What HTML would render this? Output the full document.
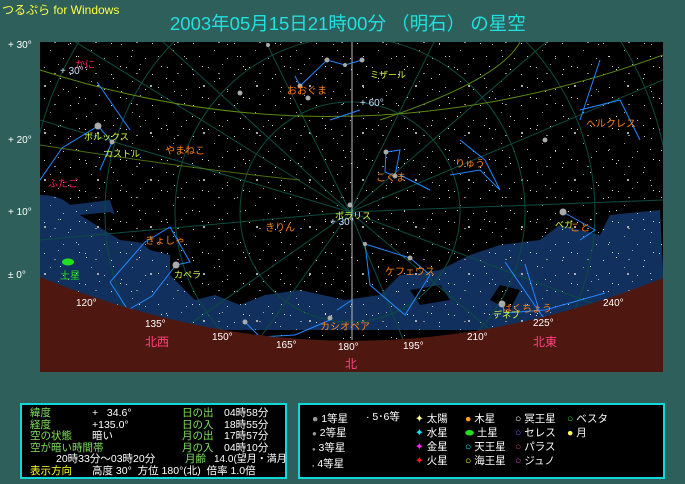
<!DOCTYPE html>
<html><head><meta charset="utf-8"><style>
body{margin:0;width:685px;height:484px;background:#2f5f5a;overflow:hidden;font-family:"Liberation Sans","Noto Sans CJK JP",sans-serif;position:relative}
.t{position:absolute;white-space:nowrap}
.panel{position:absolute;background:#000;border:2px solid #10d8d8;box-sizing:border-box;overflow:hidden}
.panel .t{font-size:10.5px;line-height:11.5px}
</style></head><body>
<div class="t" style="left:2px;top:1px;font-size:12px;color:#ffff40">つるぷら for Windows</div>
<div class="t" style="left:170px;top:10px;font-size:18.5px;color:#20e0e0">2003年05月15日21時00分 （明石） の星空</div>
<div class="t" style="left:8px;top:40px;font-size:10px;color:#fff">+ 30°</div>
<div class="t" style="left:8px;top:135px;font-size:10px;color:#fff">+ 20°</div>
<div class="t" style="left:8px;top:207px;font-size:10px;color:#fff">+ 10°</div>
<div class="t" style="left:8px;top:270px;font-size:10px;color:#fff">± 0°</div>
<svg style="position:absolute;left:40px;top:42px" width="623" height="330" viewBox="40 42 623 330">
<defs>
<pattern id="st" width="41" height="31" patternUnits="userSpaceOnUse">
<rect x="3" y="5" width="1" height="1" fill="#ccc"/><rect x="17" y="2" width="1" height="1" fill="#aaa"/><rect x="29" y="12" width="1" height="1" fill="#ddd"/><rect x="9" y="19" width="1" height="1" fill="#999"/><rect x="35" y="25" width="1" height="1" fill="#ccc"/><rect x="22" y="27" width="1" height="1" fill="#bbb"/><rect x="13" y="11" width="2" height="1" fill="#888"/><rect x="38" y="4" width="1" height="1" fill="#eee"/>
</pattern>
<pattern id="st2" width="53" height="47" patternUnits="userSpaceOnUse">
<rect x="7" y="31" width="1" height="1" fill="#ddd"/><rect x="25" y="9" width="1" height="1" fill="#ccc"/><rect x="44" y="38" width="2" height="2" fill="#aaa"/><rect x="33" y="22" width="1" height="1" fill="#eee"/><rect x="15" y="44" width="1" height="1" fill="#bbb"/>
</pattern>
</defs>
<rect x="40" y="42" width="623" height="330" fill="#000"/>
<path d="M40 195 Q60 195 70 205 L110 200 L118 225 L150 250 L170 255 L170 275 L195 300 L215 295 L240 305 L265 295 L300 290 L345 300 L380 295 L400 275 L440 270 L470 255 L500 245 L540 240 L560 225 L600 235 L610 215 L660 210 L663 270 L663 330 L40 330 Z" fill="#12305e"/>
<path d="M80 215 L110 212 L140 230 L160 245 L120 240 Z M410 290 L440 285 L450 300 L420 305 Z M490 300 L500 285 L520 290 L510 310 Z" fill="#000"/>
<rect x="40" y="42" width="623" height="330" fill="url(#st)"/>
<rect x="40" y="42" width="623" height="330" fill="url(#st2)"/>
<g fill="none" stroke="#0c4c40" stroke-width="1">
<circle cx="350" cy="212" r="110"/><circle cx="350" cy="212" r="175"/><circle cx="350" cy="212" r="245"/><circle cx="350" cy="212" r="320"/>
<path d="M350 212 L40 20 M350 212 L40 120 M350 212 L40 240 M350 212 L110 380 M350 212 L230 380 M350 212 L420 380 M350 212 L550 380 M350 212 L663 330 M350 212 L663 200 M350 212 L663 80 M350 212 L560 30 M350 212 L440 30 M350 212 L260 30 M350 212 L150 30"/>
</g>
<g fill="none" stroke="#5a8a10" stroke-width="1">
<path d="M40 70 Q350 170 663 55"/><path d="M40 145 Q200 170 300 180" opacity=".8"/><path d="M380 120 Q500 80 520 42"/><line x1="352" y1="42" x2="352" y2="340" stroke="#bbb"/>
</g>
<g fill="none" stroke="#2288ff" stroke-width="1">
<path d="M97 82 L130 130 M40 180 L62 148 L98 126 L112 142 L100 170 M300 86 L327 60 L345 65 L362 60 M300 86 L295 76 M330 120 L360 110 M386 152 L400 150 L395 176 L385 172 Z M400 175 L430 190 M450 175 L480 170 L500 190 L485 160 L460 140 M580 110 L620 100 L640 140 M600 60 L580 120 M145 242 L170 227 L190 262 L176 265 L152 296 L128 310 L110 282 Z M365 244 L410 258 L430 275 L405 315 L370 285 Z M525 264 L540 313 M505 313 L545 310 L605 293 M505 262 L540 313 L550 325 M563 212 L595 230 L580 240 M243 320 L260 337 L295 335 L330 320 M337 310 L352 300"/>
</g>
<g fill="#aaa">
<circle cx="98" cy="126" r="3.5"/><circle cx="112" cy="142" r="2.5"/><circle cx="300" cy="86" r="2.5"/><circle cx="327" cy="60" r="2.5"/><circle cx="345" cy="65" r="2"/><circle cx="362" cy="60" r="2.5"/><circle cx="308" cy="98" r="2.5"/><circle cx="240" cy="93" r="2.5"/><circle cx="350" cy="205" r="2.5"/><circle cx="386" cy="152" r="2.5"/><circle cx="395" cy="176" r="2.5"/><circle cx="563" cy="212" r="3.5"/><circle cx="502" cy="304" r="3.5"/><circle cx="176" cy="265" r="3.5"/><circle cx="410" cy="258" r="2.5"/><circle cx="365" cy="244" r="2"/><circle cx="245" cy="322" r="2.5"/><circle cx="330" cy="318" r="2.5"/><circle cx="128" cy="310" r="2"/><circle cx="545" cy="140" r="2.5"/><circle cx="268" cy="45" r="2"/></g>
<path d="M40 277 Q350 404 663 278 L663 372 L40 372 Z" fill="#4e1810"/>
<ellipse cx="68" cy="262" rx="6" ry="3.5" fill="#20e020"/>
</svg>
<div class="t" style="left:75px;top:56px;font-size:10px;color:#ff2060">かに</div>
<div class="t" style="left:60px;top:66px;font-size:10px;color:#c8e0ff">+ 30°</div>
<div class="t" style="left:360px;top:98px;font-size:10px;color:#c8e0ff">+ 60°</div>
<div class="t" style="left:330px;top:217px;font-size:10px;color:#c8e0ff">+ 30°</div>
<div class="t" style="left:48px;top:175px;font-size:10px;color:#ff2060">ふたご</div>
<div class="t" style="left:84px;top:130px;font-size:9px;color:#d8ff40">ポルックス</div>
<div class="t" style="left:104px;top:147px;font-size:9px;color:#d8ff40">カストル</div>
<div class="t" style="left:165px;top:142px;font-size:10px;color:#ff8010">やまねこ</div>
<div class="t" style="left:287px;top:82px;font-size:10px;color:#ff8010">おおぐま</div>
<div class="t" style="left:370px;top:68px;font-size:9px;color:#d8ff40">ミザール</div>
<div class="t" style="left:376px;top:169px;font-size:10px;color:#ff8010">こぐま</div>
<div class="t" style="left:455px;top:155px;font-size:10px;color:#ff8010">りゅう</div>
<div class="t" style="left:586px;top:115px;font-size:10px;color:#ff8010">ヘルクレス</div>
<div class="t" style="left:265px;top:219px;font-size:10px;color:#ff8010">きりん</div>
<div class="t" style="left:335px;top:209px;font-size:9px;color:#d8ff40">ポラリス</div>
<div class="t" style="left:145px;top:232px;font-size:10px;color:#ff8010">きょしゃ</div>
<div class="t" style="left:174px;top:268px;font-size:9px;color:#d8ff40">カペラ</div>
<div class="t" style="left:60px;top:267px;font-size:10px;color:#20e020">土星</div>
<div class="t" style="left:385px;top:263px;font-size:10px;color:#ff8010">ケフェウス</div>
<div class="t" style="left:502px;top:300px;font-size:10px;color:#ff8010">はくちょう</div>
<div class="t" style="left:493px;top:308px;font-size:9px;color:#d8ff40">デネブ</div>
<div class="t" style="left:555px;top:218px;font-size:9px;color:#d8ff40">ベガ</div>
<div class="t" style="left:570px;top:219px;font-size:10px;color:#ff8010">こと</div>
<div class="t" style="left:320px;top:318px;font-size:10px;color:#ff8010">カシオペア</div>
<div class="t" style="left:76px;top:298px;font-size:10px;color:#fff">120°</div>
<div class="t" style="left:145px;top:319px;font-size:10px;color:#fff">135°</div>
<div class="t" style="left:212px;top:332px;font-size:10px;color:#fff">150°</div>
<div class="t" style="left:276px;top:340px;font-size:10px;color:#fff">165°</div>
<div class="t" style="left:338px;top:342px;font-size:10px;color:#fff">180°</div>
<div class="t" style="left:403px;top:341px;font-size:10px;color:#fff">195°</div>
<div class="t" style="left:467px;top:332px;font-size:10px;color:#fff">210°</div>
<div class="t" style="left:533px;top:318px;font-size:10px;color:#fff">225°</div>
<div class="t" style="left:603px;top:298px;font-size:10px;color:#fff">240°</div>
<div class="t" style="left:145px;top:333px;font-size:12px;color:#ff4080">北西</div>
<div class="t" style="left:345px;top:355px;font-size:12px;color:#ff4080">北</div>
<div class="t" style="left:533px;top:333px;font-size:12px;color:#ff4080">北東</div>

<div class="panel" style="left:20px;top:403px;width:267px;height:76px">
<div class="t" style="left:8px;top:3px;color:#7fe060">緯度<br>経度<br>空の状態<br>空が暗い時間帯</div>
<div class="t" style="left:70px;top:3px;color:#fff">+&nbsp;&nbsp;&nbsp;34.6°<br>+135.0°<br>暗い</div>
<div class="t" style="left:160px;top:3px;color:#7fe060">日の出<br>日の入<br>月の出<br>月の入</div>
<div class="t" style="left:202px;top:3px;color:#fff">04時58分<br>18時55分<br>17時57分<br>04時10分</div>
<div class="t" style="left:34px;top:49px;color:#fff">20時33分～03時20分</div>
<div class="t" style="left:163px;top:49px;color:#7fe060">月齢</div>
<div class="t" style="left:192px;top:49px;color:#fff;font-size:10px">14.0(望月・満月)</div>
<div class="t" style="left:8px;top:61px;color:#ffff20">表示方向</div>
<div class="t" style="left:70px;top:61px;color:#fff">高度 30° &nbsp;方位 180°(北) &nbsp;倍率 1.0倍</div>
</div>

<div class="panel" style="left:298px;top:403px;width:367px;height:76px">
<div class="t" style="left:12px;top:7px;color:#fff;line-height:14px"><span style="color:#999">●</span> 1等星<br><span style="color:#999;font-size:8px">●</span> 2等星<br><span style="color:#999;font-size:6px">●</span> 3等星<br><span style="color:#999;font-size:4px">●</span> 4等星</div>
<div class="t" style="left:66px;top:7px;color:#fff">· 5･6等</div>
<div class="t" style="left:115px;top:7px;color:#fff;line-height:14px"><span style="color:#ffffa0">✦</span> 太陽<br><span style="color:#20e0ff">✦</span> 水星<br><span style="color:#ff20ff">✦</span> 金星<br><span style="color:#ff2020">✦</span> 火星</div>
<div class="t" style="left:165px;top:7px;color:#fff;line-height:14px"><span style="color:#ffa020">●</span> 木星<br><span style="color:#20e020">⬬</span> 土星<br><span style="color:#20e0ff">○</span> 天王星<br><span style="color:#ffff20">○</span> 海王星</div>
<div class="t" style="left:215px;top:7px;color:#fff;line-height:14px"><span>○</span> 冥王星<br><span style="color:#6060ff">○</span> セレス<br><span style="color:#c04050">○</span> パラス<br><span style="color:#c040c0">○</span> ジュノ</div>
<div class="t" style="left:267px;top:7px;color:#fff;line-height:14px"><span style="color:#40c040">○</span> ベスタ<br><span style="color:#ffff60">●</span> 月</div>
</div>
</body></html>
